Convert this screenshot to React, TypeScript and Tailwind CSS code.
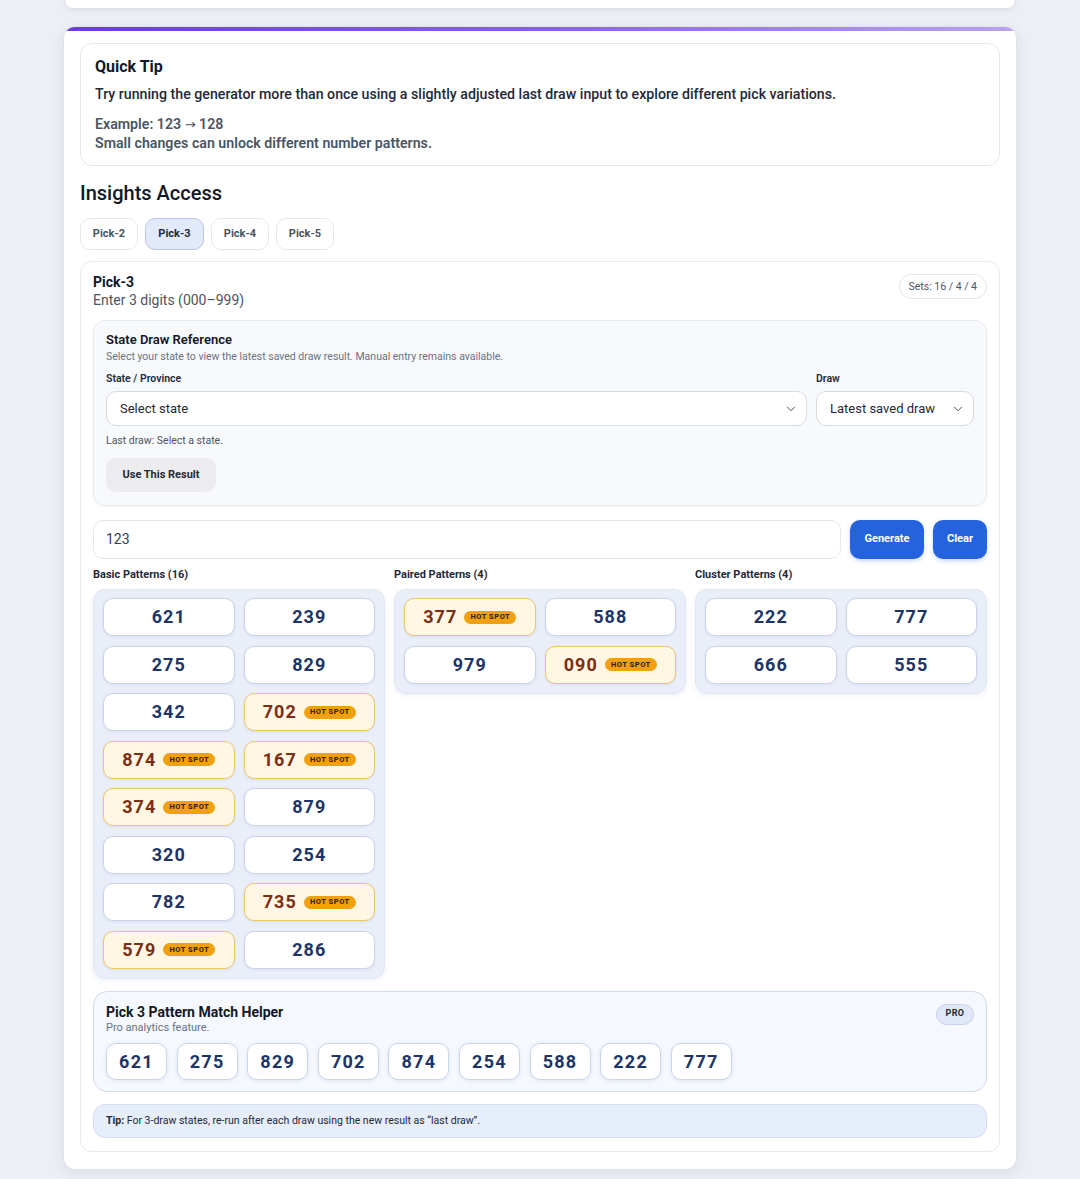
import React from "react";
import { ChevronDown } from "lucide-react";

type Pick = { n: string; hot?: boolean };

const basic: Pick[] = [
  { n: "621" }, { n: "239" },
  { n: "275" }, { n: "829" },
  { n: "342" }, { n: "702", hot: true },
  { n: "874", hot: true }, { n: "167", hot: true },
  { n: "374", hot: true }, { n: "879" },
  { n: "320" }, { n: "254" },
  { n: "782" }, { n: "735", hot: true },
  { n: "579", hot: true }, { n: "286" },
];

const paired: Pick[] = [
  { n: "377", hot: true }, { n: "588" },
  { n: "979" }, { n: "090", hot: true },
];

const cluster: Pick[] = [{ n: "222" }, { n: "777" }, { n: "666" }, { n: "555" }];

const helper = ["621", "275", "829", "702", "874", "254", "588", "222", "777"];

function NumberCell({ p }: { p: Pick }) {
  if (p.hot) {
    return (
      <div className="h-[38px] rounded-[10px] border border-[#efc36c] bg-[#fff6e4] shadow-[0_1px_3px_rgba(30,58,110,0.08)] flex items-center justify-center gap-[7px]">
        <span className="text-[18px] font-bold tracking-[0.06em] text-[#7a2f14] leading-none">{p.n}</span>
        <span className="h-[13px] px-[6px] rounded-full bg-[#f1a10f] text-[7.5px] font-extrabold tracking-[0.07em] text-[#3a2206] flex items-center leading-none">
          HOT SPOT
        </span>
      </div>
    );
  }
  return (
    <div className="h-[38px] rounded-[10px] border border-[#c9d4e8] bg-white shadow-[0_1px_3px_rgba(30,58,110,0.08)] flex items-center justify-center">
      <span className="text-[18px] font-bold tracking-[0.06em] text-[#1c3468] leading-none">{p.n}</span>
    </div>
  );
}

function PatternColumn({ title, items }: { title: string; items: Pick[] }) {
  return (
    <div className="flex flex-col">
      <div className="text-[11px] font-bold text-[#1f2937] leading-[14px]">{title}</div>
      <div className="mt-[7px] rounded-[12px] border border-[#e0e7f4] bg-[#e9eef9] px-[9px] pt-[8px] pb-[9px] shadow-[0_2px_6px_rgba(30,58,110,0.06)] grid grid-cols-2 gap-x-[9px] gap-y-[9.5px]">
        {items.map((p, i) => (
          <NumberCell key={i} p={p} />
        ))}
      </div>
    </div>
  );
}

function SelectBox({ label, className }: { label: string; className?: string }) {
  return (
    <div
      className={
        "h-[35px] rounded-[10px] border border-[#d7dce4] bg-white flex items-center justify-between pl-[13px] pr-[8px] " +
        (className ?? "")
      }
    >
      <span className="text-[13px] text-[#1f2937]">{label}</span>
      <ChevronDown size={14} strokeWidth={1.6} className="text-[#374151]" />
    </div>
  );
}

export default function App() {
  return (
    <div
      className="min-h-screen bg-[#eceff5] px-[63px] pb-[9px]"
      style={{ fontFamily: "Roboto, 'Noto Sans', Arial, sans-serif" }}
    >
      {/* bottom edge of the previous panel */}
      <div className="h-[9px] mx-[1px] rounded-b-[12px] bg-white border border-t-0 border-[#dde2ea] shadow-[0_2px_6px_rgba(30,40,80,0.06)]" />

      <div className="mt-[17px] rounded-[12px] bg-white border border-[#dfe3ea] shadow-[0_4px_14px_rgba(30,40,80,0.08)] overflow-hidden">
        <div className="h-[4px] bg-gradient-to-r from-[#6b3bd6] via-[#8a5ee3] to-[#b8a2ef]" />
        <div className="px-[16px] pt-[12px] pb-[17px]">
          {/* Quick tip */}
          <div className="rounded-[12px] border border-[#e4e7ec] px-[14px] pt-[13px] pb-[13px]">
            <div className="text-[16px] font-bold text-[#111827] leading-[20px]">Quick Tip</div>
            <div className="mt-[7px] text-[14.2px] font-medium text-[#1f2937] leading-[20px]">
              Try running the generator more than once using a slightly adjusted last draw input to explore different pick variations.
            </div>
            <div className="mt-[11px] text-[14.2px] font-semibold text-[#4b5563] leading-[18px]">
              <div>
                Example: 123{" "}
                <span style={{ fontFamily: "'DejaVu Sans', sans-serif" }} className="text-[13px] font-normal">
                  →
                </span>{" "}
                128
              </div>
              <div>Small changes can unlock different number patterns.</div>
            </div>
          </div>

          <div className="mt-[13px] text-[20px] font-medium text-[#111827] leading-[28px]">Insights Access</div>

          {/* tabs */}
          <div className="mt-[11px] flex gap-[7px]">
            {["Pick-2", "Pick-3", "Pick-4", "Pick-5"].map((t) => (
              <div
                key={t}
                className={
                  t === "Pick-3"
                    ? "h-[32px] w-[59px] rounded-[10px] border border-[#b9c8e8] bg-[#e1e9fb] text-[11px] font-bold text-[#1f2937] flex items-center justify-center"
                    : "h-[32px] w-[58px] rounded-[10px] border border-[#e5e7eb] bg-white text-[11px] font-bold text-[#4b5563] flex items-center justify-center"
                }
              >
                {t}
              </div>
            ))}
          </div>

          {/* pick-3 card */}
          <div className="mt-[11px] rounded-[12px] border border-[#e6e9ee] px-[12px] pt-[11px] pb-[13px]">
            <div className="flex items-start justify-between">
              <div>
                <div className="text-[14px] font-bold text-[#111827] leading-[18px]">Pick-3</div>
                <div className="text-[14px] text-[#4b5563] leading-[18px]">Enter 3 digits (000–999)</div>
              </div>
              <div className="mt-[1px] h-[25px] px-[9px] rounded-full border border-[#e2e5ea] text-[10.5px] text-[#4b5563] flex items-center">
                Sets: 16 / 4 / 4
              </div>
            </div>

            {/* state draw reference */}
            <div className="mt-[11px] rounded-[12px] border border-[#e6e9ee] bg-[#f8f9fb] px-[12px] pt-[10px] pb-[13px] shadow-[0_1px_3px_rgba(30,40,80,0.04)]">
              <div className="text-[13px] font-semibold text-[#111827] leading-[18px]">State Draw Reference</div>
              <div className="text-[10.5px] text-[#6b7280] leading-[16px]">
                Select your state to view the latest saved draw result. Manual entry remains available.
              </div>
              <div className="mt-[6px] flex gap-[9px]">
                <div className="flex-1">
                  <div className="text-[10.5px] font-semibold text-[#1f2937] leading-[16px]">State / Province</div>
                  <SelectBox label="Select state" className="mt-[4px]" />
                </div>
                <div className="w-[158px]">
                  <div className="text-[10.5px] font-semibold text-[#1f2937] leading-[16px]">Draw</div>
                  <SelectBox label="Latest saved draw" className="mt-[4px]" />
                </div>
              </div>
              <div className="mt-[7px] text-[10.5px] text-[#4b5563] leading-[16px]">Last draw: Select a state.</div>
              <div className="mt-[9px] h-[34px] w-[110px] rounded-[10px] bg-[#ececee] text-[11px] font-bold text-[#1f2937] flex items-center justify-center">
                Use This Result
              </div>
            </div>

            {/* input row */}
            <div className="mt-[14px] flex gap-[9px]">
              <div className="flex-1 h-[39px] rounded-[10px] border border-[#e3e6eb] bg-white flex items-center px-[12px] text-[14px] text-[#374151]">
                123
              </div>
              <div className="h-[39px] w-[74px] rounded-[10px] bg-[#2563de] text-white text-[11px] font-bold flex items-center justify-center shadow-[0_2px_4px_rgba(37,99,222,0.25)]">
                Generate
              </div>
              <div className="h-[39px] w-[54px] rounded-[10px] bg-[#2563de] text-white text-[11px] font-bold flex items-center justify-center shadow-[0_2px_4px_rgba(37,99,222,0.25)]">
                Clear
              </div>
            </div>

            {/* patterns */}
            <div className="mt-[9px] grid grid-cols-3 gap-[9px] items-start">
              <PatternColumn title="Basic Patterns (16)" items={basic} />
              <PatternColumn title="Paired Patterns (4)" items={paired} />
              <PatternColumn title="Cluster Patterns (4)" items={cluster} />
            </div>

            {/* pattern match helper */}
            <div className="mt-[12px] rounded-[14px] border border-[#d3dcec] bg-[#f5f8fe] px-[12px] pt-[11px] pb-[11px]">
              <div className="flex items-start justify-between">
                <div>
                  <div className="text-[14px] font-bold text-[#111827] leading-[18px]">Pick 3 Pattern Match Helper</div>
                  <div className="text-[11px] text-[#6b7280] leading-[14px]">Pro analytics feature.</div>
                </div>
                <div className="mt-[1px] h-[21px] w-[38px] rounded-full border border-[#c6d2ea] bg-[#dfe7f8] text-[9px] font-bold tracking-[0.04em] text-[#1f2937] flex items-center justify-center">
                  PRO
                </div>
              </div>
              <div className="mt-[8px] flex gap-[9.6px]">
                {helper.map((n, i) => (
                  <div
                    key={i}
                    className="h-[37px] w-[61px] rounded-[10px] border border-[#cbd5e8] bg-white shadow-[0_1px_4px_rgba(30,58,110,0.1)] flex items-center justify-center text-[18px] font-bold tracking-[0.07em] text-[#1c3468]"
                  >
                    {n}
                  </div>
                ))}
              </div>
            </div>

            {/* tip bar */}
            <div className="mt-[12px] h-[34px] rounded-[12px] border border-[#d5def0] bg-[#e6edfb] px-[12px] flex items-center text-[10.5px] text-[#1f2937]">
              <span className="font-bold">Tip:</span>
              <span>&nbsp;For 3-draw states, re-run after each draw using the new result as “last draw”.</span>
            </div>
          </div>
        </div>
      </div>
    </div>
  );
}
